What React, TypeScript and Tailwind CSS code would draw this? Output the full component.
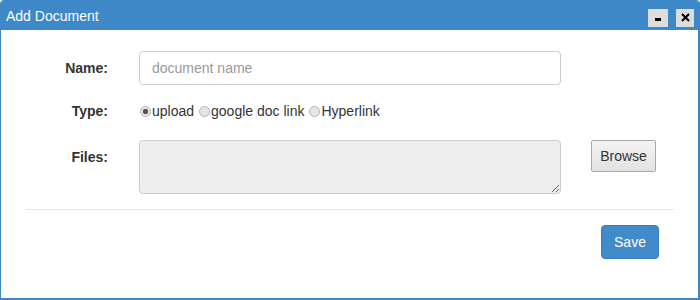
import { useState } from 'react';

export default function App() {
  const [type, setType] = useState('upload');
  const [name, setName] = useState('');

  const radios = [
    { value: 'upload', label: 'upload' },
    { value: 'gdoc', label: 'google doc link' },
    { value: 'link', label: 'Hyperlink' },
  ];

  return (
    <div className="w-[700px] h-[300px] bg-white font-['Liberation_Sans',Arial,sans-serif] text-[14px] text-[#333]">
      <div className="w-full h-full flex flex-col border border-[#3e88c8] border-r-2 border-b-2 rounded-t-[4px] overflow-hidden">
        {/* Title bar */}
        <div className="h-[29px] shrink-0 bg-[#3e88c8] flex items-center pl-[5px] pr-[4px]">
          <span className="text-white text-[14px] leading-none">Add Document</span>
          <div className="ml-auto flex items-center gap-[8px] mt-[4px]">
            <button className="w-[20px] h-[18px] bg-[#dddddd] flex items-center justify-center">
              <div className="w-[6px] h-[3px] bg-black mt-[3px]" />
            </button>
            <button className="w-[18px] h-[18px] bg-[#dddddd] flex items-center justify-center">
              <svg width="9" height="9" viewBox="0 0 9 9">
                <path d="M1 1 L8 8 M8 1 L1 8" stroke="#000" strokeWidth="2" />
              </svg>
            </button>
          </div>
        </div>

        {/* Body */}
        <div className="flex-1 pl-[25px] pr-[24px] pt-[21px]">
          <div className="flex items-start">
            <label className="w-[82px] text-right font-bold pt-[7px] leading-[20px]">Name:</label>
            <input
              value={name}
              onChange={e => setName(e.target.value)}
              placeholder="document name"
              className="ml-[31px] w-[422px] h-[34px] border border-[#cccccc] rounded-[4px] px-[12px] text-[14px] placeholder:text-[#999] focus:outline-none"
            />
          </div>

          <div className="flex items-center mt-[16px] h-[20px]">
            <label className="w-[82px] text-right font-bold leading-[20px]">Type:</label>
            <div className="ml-[31px] flex items-center">
              {radios.map((r, i) => (
                <label key={r.value} className={`flex items-center ${i > 0 ? 'ml-[4px]' : ''}`}>
                  <input
                    type="radio"
                    name="type"
                    checked={type === r.value}
                    onChange={() => setType(r.value)}
                    className="appearance-none ml-[1px] mr-[1px] w-[11px] h-[11px] rounded-full border border-[#b5b5b5] bg-[#e6e6e6] checked:bg-[radial-gradient(circle,#555_0,#555_2.5px,#e6e6e6_3px)]"
                  />
                  <span className="leading-[20px]">{r.label}</span>
                </label>
              ))}
            </div>
          </div>

          <div className="flex items-start mt-[19px]">
            <label className="w-[82px] text-right font-bold pt-[7px] leading-[20px]">Files:</label>
            <textarea
              disabled
              className="ml-[31px] w-[422px] h-[54px] border border-[#cccccc] rounded-[4px] bg-[#eeeeee] resize"
            />
            <button className="ml-[30px] w-[65px] h-[32px] border border-[#a9a9a9] rounded-[2px] bg-[linear-gradient(#f4f4f4,#e2e2e2)] text-[#333] text-[14px]">
              Browse
            </button>
          </div>

          <div className="mt-[15px] border-t border-[#e5e5e5]" />

          <div className="flex justify-end pr-[15px] mt-[15px]">
            <button className="w-[58px] h-[34px] bg-[#428bca] border border-[#357ebd] rounded-[4px] text-white text-[14px]">
              Save
            </button>
          </div>
        </div>
      </div>
    </div>
  );
}
